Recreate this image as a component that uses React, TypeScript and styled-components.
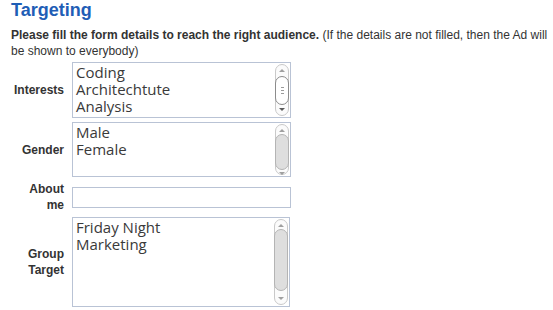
import styled, { createGlobalStyle } from "styled-components";

const GlobalStyle = createGlobalStyle`
  html, body {
    margin: 0;
    padding: 0;
    background: #ffffff;
  }
  body {
    font-family: "Liberation Sans", Arial, sans-serif;
    color: #333333;
  }
`;

const Page = styled.div`
  width: 553px;
  height: 310px;
  box-sizing: border-box;
  padding: 0 0 0 11px;
  overflow: hidden;
`;

const Title = styled.h2`
  margin: 0;
  font-size: 18px;
  line-height: 20px;
  font-weight: bold;
  color: #1f5eb6;
`;

const Intro = styled.p`
  margin: 7px 0 0;
  font-size: 12px;
  line-height: 16px;
  color: #333333;

  strong {
    font-weight: bold;
  }
`;

const Form = styled.div`
  display: grid;
  grid-template-columns: 53px auto;
  justify-content: start;
  column-gap: 8px;
  row-gap: 4px;
  align-items: center;
  margin-top: 3px;
`;

const Label = styled.label`
  font-size: 12px;
  line-height: 16px;
  font-weight: bold;
  text-align: right;
  color: #333333;
`;

const Box = styled.div<{ $h: number; $w?: number }>`
  display: flex;
  box-sizing: border-box;
  width: ${(p) => p.$w ?? 219}px;
  height: ${(p) => p.$h}px;
  border: 1px solid #b9c3d5;
  background: #ffffff;
`;

const Items = styled.div`
  flex: 1;
  padding: 1px 0 0 3px;
  font-family: "Open Sans", "DejaVu Sans", sans-serif;
  font-size: 15px;
  line-height: 17px;
  color: #3a3a3a;
  overflow: hidden;
`;

const TextInput = styled.input`
  box-sizing: border-box;
  width: 219px;
  height: 21px;
  border: 1px solid #b9c3d5;
  padding: 0 3px;
  margin: 0;
  outline: none;
`;

const Track = styled.div`
  display: flex;
  flex-direction: column;
  align-items: center;
  box-sizing: border-box;
  width: 14px;
  margin: 1px 1px 1px 0;
  border: 1px solid #c9c9c9;
  border-radius: 7px;
  background: #fbfbfb;
`;

const Arrow = styled.div<{ $down?: boolean; $dark?: boolean }>`
  flex: none;
  width: 0;
  height: 0;
  margin: ${(p) => (p.$down ? "2px 0 4px" : "4px 0 2px")};
  border-left: 3px solid transparent;
  border-right: 3px solid transparent;
  ${(p) =>
    p.$down
      ? `border-top: 3px solid ${p.$dark ? "#5a5a5a" : "#a0a0a0"};`
      : `border-bottom: 3px solid #a0a0a0;`}
`;

const Gap = styled.div<{ $h: number }>`
  flex: none;
  height: ${(p) => p.$h}px;
`;

const Fill = styled.div`
  flex: 1;
`;

const Thumb = styled.div<{ $h: number; $active?: boolean }>`
  flex: none;
  display: flex;
  flex-direction: column;
  align-items: center;
  justify-content: center;
  gap: 2px;
  box-sizing: border-box;
  width: 14px;
  height: ${(p) => p.$h}px;
  border: 1px solid ${(p) => (p.$active ? "#8c8c8c" : "#b4b4b4")};
  border-radius: 7px;
  background: ${(p) => (p.$active ? "#ffffff" : "#dedede")};
`;

const Grip = styled.span`
  display: block;
  width: 3px;
  height: 1px;
  background: #9a9a9a;
`;

function Scrollbar({
  top,
  thumb,
  active,
}: {
  top: number;
  thumb: number;
  active?: boolean;
}) {
  return (
    <Track>
      <Arrow />
      <Gap $h={top} />
      <Thumb $h={thumb} $active={active}>
        {active && (
          <>
            <Grip />
            <Grip />
            <Grip />
          </>
        )}
      </Thumb>
      <Fill />
      <Arrow $down $dark={active} />
    </Track>
  );
}

function ListBox({
  items,
  height,
  width,
  top,
  thumb,
  active,
}: {
  items: string[];
  height: number;
  width?: number;
  top: number;
  thumb: number;
  active?: boolean;
}) {
  return (
    <Box $h={height} $w={width}>
      <Items>
        {items.map((item) => (
          <div key={item}>{item}</div>
        ))}
      </Items>
      <Scrollbar top={top} thumb={thumb} active={active} />
    </Box>
  );
}

export default function App() {
  return (
    <>
      <GlobalStyle />
      <Page>
        <Title>Targeting</Title>
        <Intro>
          <strong>Please fill the form details to reach the right audience.</strong>{" "}
          (If the details are not filled, then the Ad will be shown to everybody)
        </Intro>
        <Form>
          <Label>Interests</Label>
          <ListBox
            items={["Coding", "Architechtute", "Analysis"]}
            height={56}
            top={2}
            thumb={29}
            active
          />

          <Label>Gender</Label>
          <ListBox items={["Male", "Female"]} height={55} top={-2} thumb={36} />

          <Label>About me</Label>
          <TextInput type="text" />

          <Label>Group Target</Label>
          <ListBox
            items={["Friday Night", "Marketing"]}
            height={90}
            width={218}
            top={0}
            thumb={62}
          />
        </Form>
      </Page>
    </>
  );
}
